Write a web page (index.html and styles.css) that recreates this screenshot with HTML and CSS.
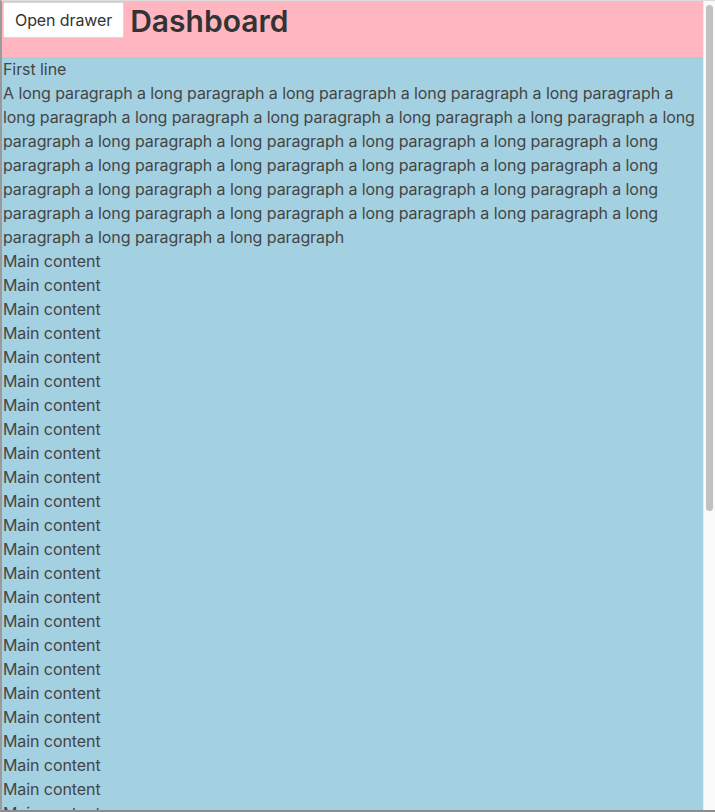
FILE: index.html
```html
<!DOCTYPE html>
<html>
<head>
<meta charset="utf-8">
<link rel="stylesheet" href="styles.css">
</head>
<body>
<div class="frame">
  <div class="viewport">
    <header class="topbar">
      <button class="drawer-btn">Open drawer</button>
      <h1 class="title">Dashboard</h1>
    </header>
    <main class="content">
      <div class="line">First line</div>
      <p class="para">A long paragraph a long paragraph a long paragraph a long paragraph a long paragraph a long paragraph a long paragraph a long paragraph a long paragraph a long paragraph a long paragraph a long paragraph a long paragraph a long paragraph a long paragraph a long paragraph a long paragraph a long paragraph a long paragraph a long paragraph a long paragraph a long paragraph a long paragraph a long paragraph a long paragraph a long paragraph a long paragraph a long paragraph a long paragraph a long paragraph a long paragraph a long paragraph a long paragraph</p>
      <div class="line">Main content</div>
      <div class="line">Main content</div>
      <div class="line">Main content</div>
      <div class="line">Main content</div>
      <div class="line">Main content</div>
      <div class="line">Main content</div>
      <div class="line">Main content</div>
      <div class="line">Main content</div>
      <div class="line">Main content</div>
      <div class="line">Main content</div>
      <div class="line">Main content</div>
      <div class="line">Main content</div>
      <div class="line">Main content</div>
      <div class="line">Main content</div>
      <div class="line">Main content</div>
      <div class="line">Main content</div>
      <div class="line">Main content</div>
      <div class="line">Main content</div>
      <div class="line">Main content</div>
      <div class="line">Main content</div>
      <div class="line">Main content</div>
      <div class="line">Main content</div>
      <div class="line">Main content</div>
      <div class="line">Main content</div>
    </main>
  </div>
  <div class="scrollbar"><div class="thumb"></div></div>
</div>
</body>
</html>
```
FILE: styles.css
```css
html, body {
  margin: 0;
  padding: 0;
  height: 100%;
  overflow: hidden;
  background: #ffffff;
}
.frame {
  box-sizing: border-box;
  height: 812px;
  width: 715px;
  border-top: 1px solid #dcdcdc;
  border-left: 2px solid #9a9a9a;
  border-bottom: 2px solid #8c8c8c;
  display: flex;
  font-family: "Inter", "Liberation Sans", sans-serif;
  font-size: 16px;
  line-height: 24px;
  color: #454545;
}
.viewport {
  flex: 1;
  min-width: 0;
  overflow: hidden;
  background: #a3d1e2;
}
.scrollbar {
  width: 12px;
  flex: none;
  background: #fafafa;
  border-left: 1px solid #ececec;
  padding: 4px 2px 0 2px;
  box-sizing: border-box;
}
.thumb {
  height: 506px;
  width: 7px;
  background: #c1c1c1;
  border-radius: 4px;
}
.topbar {
  display: flex;
  align-items: flex-start;
  gap: 6px;
  height: 56px;
  background: #ffb6c1;
  padding: 1px 0 0 1px;
  box-sizing: border-box;
}
.drawer-btn {
  font-family: inherit;
  font-size: 16px;
  letter-spacing: -0.1px;
  color: #333;
  background: #fff;
  border: 1px solid #d8d8d8;
  border-radius: 2px;
  height: 36px;
  padding: 0 11px;
  margin: 0;
}
.title {
  margin: 0;
  font-size: 30px;
  font-weight: 600;
  line-height: 38px;
  color: #333;
}
.content {
  display: block;
  padding: 0 0 0 1px;
  letter-spacing: -0.08px;
}
.line {
  white-space: nowrap;
}
.para {
  margin: 0;
}
```
